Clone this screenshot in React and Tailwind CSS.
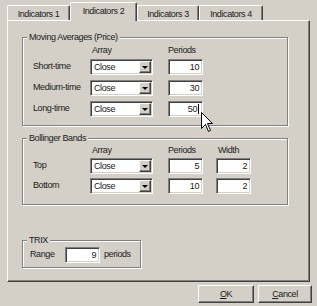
import React from 'react';

const sunken =
  'border border-t-[#808080] border-l-[#808080] border-b-white border-r-white shadow-[inset_1px_1px_0_#404040,inset_-1px_-1px_0_#d4d0c8] bg-white';
const raised =
  'border border-t-white border-l-white border-r-[#404040] border-b-[#404040] shadow-[inset_-1px_-1px_0_#808080] bg-[#d4d0c8]';

function Combo() {
  return (
    <div className={`${sunken} w-[63px] h-[16px] flex p-px`}>
      <div className="flex-1 pl-[2px] leading-[12px]">Close</div>
      <div className={`${raised} w-[12px] h-full flex items-center justify-center`}>
        <div className="w-0 h-0 border-x-[3px] border-x-transparent border-t-[3px] border-t-black" />
      </div>
    </div>
  );
}

function Field({ value, caret, width = 'w-[35px]' }) {
  return (
    <div className={`${sunken} ${width} h-[16px] flex items-center justify-end pr-[3px]`}>
      <span className="leading-[12px]">{value}</span>
      {caret && <span className="w-px h-[10px] bg-black ml-px" />}
    </div>
  );
}

function Group({ title, className, children }) {
  return (
    <div className={`relative border border-[#808080] shadow-[inset_1px_1px_0_#fff,1px_1px_0_#fff] ${className}`}>
      <span className="absolute -top-[7px] left-[4px] bg-[#d4d0c8] px-[2px] leading-[13px]">{title}</span>
      {children}
    </div>
  );
}

function Tab({ label, active, width }) {
  if (active) {
    return (
      <div
        className={`${width} h-[19px] -mb-px relative z-10 bg-[#d4d0c8] border-t border-l border-t-white border-l-white border-r border-r-[#404040] shadow-[inset_-1px_0_0_#808080] rounded-t-[2px] flex justify-center pt-[2px] leading-[13px]`}
      >
        {label}
      </div>
    );
  }
  return (
    <div
      className={`${width} h-[15px] bg-[#d4d0c8] border-t border-l border-t-white border-l-white border-r border-r-[#404040] shadow-[inset_-1px_0_0_#808080] rounded-t-[2px] flex justify-center pt-[2px] leading-[13px]`}
    >
      {label}
    </div>
  );
}

function Row({ label, children }) {
  return (
    <div className="flex items-center h-[16px] pl-[10px]">
      <div className="w-[57px] whitespace-nowrap">{label}</div>
      {children}
    </div>
  );
}

export default function App() {
  return (
    <div className="w-[317px] h-[306px] bg-[#d4d0c8] relative overflow-hidden text-[9px] tracking-[-0.4px] text-[#202020] font-['Liberation_Sans',Arial,sans-serif]">
      {/* tabs */}
      <div className="flex items-end h-[18px] mt-[2px] pl-[7px]">
        <Tab label="Indicators 1" width="w-[63px]" />
        <Tab label="Indicators 2" width="w-[67px]" active />
        <Tab label="Indicators 3" width="w-[62px]" />
        <Tab label="Indicators 4" width="w-[64px]" />
      </div>

      {/* tab panel */}
      <div className="ml-[7px] w-[303px] h-[262px] border border-t-white border-l-white border-r-[#404040] border-b-[#404040] shadow-[inset_-1px_-1px_0_#808080] pl-[14px] pt-[16px]">
        <Group title="Moving Averages (Price)" className="w-[266px] h-[89px] pt-[6px]">
          <div className="flex h-[13px] leading-[13px] pl-[10px]">
            <div className="w-[57px]" />
            <div className="w-[63px] pl-[2px]">Array</div>
            <div className="w-[15px]" />
            <div className="w-[35px]">Periods</div>
          </div>
          <div className="flex flex-col gap-[5px] mt-[2px]">
            <Row label="Short-time">
              <Combo />
              <div className="w-[15px]" />
              <Field value="10" />
            </Row>
            <Row label="Medium-time">
              <Combo />
              <div className="w-[15px]" />
              <Field value="30" />
            </Row>
            <Row label="Long-time">
              <Combo />
              <div className="w-[15px]" />
              <Field value="50" caret />
            </Row>
          </div>
        </Group>

        <Group title="Bollinger Bands" className="w-[266px] h-[67px] mt-[12px] pt-[5px]">
          <div className="flex h-[13px] leading-[13px] pl-[10px]">
            <div className="w-[57px]" />
            <div className="w-[63px] pl-[2px]">Array</div>
            <div className="w-[15px]" />
            <div className="w-[35px]">Periods</div>
            <div className="w-[13px]" />
            <div className="w-[35px] pl-[2px]">Width</div>
          </div>
          <div className="flex flex-col gap-[4px] mt-[1px]">
            <Row label="Top">
              <Combo />
              <div className="w-[15px]" />
              <Field value="5" />
              <div className="w-[13px]" />
              <Field value="2" />
            </Row>
            <Row label="Bottom">
              <Combo />
              <div className="w-[15px]" />
              <Field value="10" />
              <div className="w-[13px]" />
              <Field value="2" />
            </Row>
          </div>
        </Group>

        <Group title="TRIX" className="w-[119px] h-[28px] mt-[35px] pt-[6px]">
          <div className="flex items-center h-[16px] pl-[7px]">
            <div className="w-[35px]">Range</div>
            <Field value="9" />
            <div className="ml-[4px]">periods</div>
          </div>
        </Group>
      </div>

      {/* buttons */}
      <div className="flex justify-end gap-[4px] pr-[5px] mt-[3px]">
        <button className={`${raised} w-[56px] h-[18px] leading-[13px]`}>
          <span className="underline">O</span>K
        </button>
        <button className={`${raised} w-[54px] h-[18px] leading-[13px]`}>
          <span className="underline">C</span>ancel
        </button>
      </div>

      {/* mouse pointer */}
      <svg className="absolute left-[201px] top-[112px]" width="14" height="22" viewBox="0 0 14 22">
        <path
          d="M0.5 0.5 L0.5 16.5 L4.5 12.5 L7.5 19.5 L9.5 18.5 L6.5 11.5 L11.5 11.5 Z"
          fill="#fff"
          stroke="#000"
          strokeWidth="1"
          strokeLinejoin="miter"
        />
      </svg>
    </div>
  );
}
